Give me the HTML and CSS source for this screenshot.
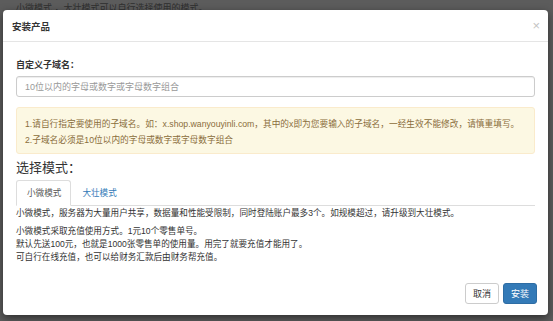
FILE: index.html
```html
<!DOCTYPE html>
<html lang="zh-CN">
<head>
  <meta charset="UTF-8" />
  <meta name="viewport" content="width=device-width, initial-scale=1.0"/>
  <title>安装产品</title>
  <link rel="stylesheet" href="styles.css">
</head>
<body>
  <div class="page">
    <p class="page-text">小微模式 ，大壮模式可以自行选择使用的模式。</p>
  </div>

  <div class="backdrop"></div>

  <div class="modal">
    <div class="modal-header">
      <h4 class="modal-title">安装产品</h4>
      <span class="close">&times;</span>
    </div>

    <div class="modal-body">
      <label class="field-label">自定义子域名：</label>
      <input class="field-input" type="text" placeholder="10位以内的字母或数字或字母数字组合" />

      <div class="alert">
        <p>1.请自行指定要使用的子域名。如：x.shop.wanyouyinli.com，其中的x即为您要输入的子域名，一经生效不能修改，请慎重填写。</p>
        <p>2.子域名必须是10位以内的字母或数字或字母数字组合</p>
      </div>

      <h3 class="mode-title">选择模式：</h3>
      <ul class="tabs">
        <li class="tab active">小微模式</li>
        <li class="tab">大壮模式</li>
      </ul>
      <div class="tab-content">
        <p>小微模式，服务器为大量用户共享，数据量和性能受限制，同时登陆账户最多3个。如规模超过，请升级到大壮模式。</p>
        <p>小微模式采取充值使用方式。1元10个零售单号。<br>默认先送100元，也就是1000张零售单的使用量。用完了就要充值才能用了。<br>可自行在线充值，也可以给财务汇款后由财务帮充值。</p>
      </div>
    </div>

    <div class="modal-footer">
      <button class="btn btn-default">取消</button>
      <button class="btn btn-primary">安装</button>
    </div>
  </div>
</body>
</html>
```

FILE: styles.css
```css
* {
  box-sizing: border-box;
  font-family: "Liberation Sans", "Noto Sans CJK SC", sans-serif;
}

body {
  margin: 0;
  background: #fff;
  width: 553px;
  height: 321px;
  overflow: hidden;
}

.page {
  padding: 1px 16px;
}

.page-text {
  margin: 0;
  font-size: 9px;
  color: #888;
}

.backdrop {
  position: absolute;
  left: 0;
  top: 0;
  width: 553px;
  height: 321px;
  background: rgba(0, 0, 0, 0.64);
}

.modal {
  position: absolute;
  left: 3px;
  top: 10px;
  width: 545px;
  height: 305px;
  background: #fff;
  border-radius: 4px;
  box-shadow: 0 3px 8px rgba(0, 0, 0, 0.5);
  display: flex;
  flex-direction: column;
  color: #333;
}

.modal-header {
  height: 32px;
  padding: 0 8px 0 9px;
  border-bottom: 1px solid #e5e5e5;
  display: flex;
  align-items: center;
  justify-content: space-between;
}

.modal-title {
  margin: 0;
  font-size: 9.5px;
  font-weight: bold;
  color: #333;
}

.close {
  font-size: 13px;
  color: #c4c4c4;
  line-height: 1;
}

.modal-body {
  flex: 1;
  padding: 17px 13px 0;
  display: flex;
  flex-direction: column;
}

.field-label {
  font-size: 9px;
  font-weight: bold;
  line-height: 12px;
}

.field-input {
  margin-top: 5px;
  height: 21px;
  width: 100%;
  border: 1px solid #ccc;
  border-radius: 3px;
  padding: 0 8px;
  font-size: 9px;
  color: #555;
  box-shadow: inset 0 1px 1px rgba(0, 0, 0, 0.075);
}

.field-input::placeholder {
  color: #999;
}

.alert {
  margin-top: 10px;
  padding: 8px 8px 6px;
  height: 47px;
  background: #fcf8e3;
  border: 1px solid #faebcc;
  border-radius: 3px;
  color: #8a6d3b;
  font-size: 8.7px;
  line-height: 16px;
  white-space: nowrap;
}

.alert p {
  margin: 0;
}

.mode-title {
  margin: 6px 0 0;
  font-size: 13px;
  font-weight: normal;
  line-height: 16px;
}

.tabs {
  list-style: none;
  margin: 4px 0 0;
  padding: 0;
  display: flex;
  border-bottom: 1px solid #ddd;
}

.tab {
  font-size: 8.6px;
  color: #337ab7;
  height: 26px;
  line-height: 25px;
  padding: 0 9px 0 10px;
  margin-bottom: -1px;
  border: 1px solid transparent;
  border-radius: 3px 3px 0 0;
}

.tab.active {
  color: #555;
  background: #fff;
  border-color: #ddd #ddd transparent;
}

.tab-content {
  font-size: 8.6px;
  line-height: 13px;
}

.tab-content p {
  margin: 1px 0 5px;
}

.modal-footer {
  padding: 0 11px 11px;
  display: flex;
  justify-content: flex-end;
  gap: 4px;
}

.btn {
  width: 34px;
  height: 21px;
  padding: 0;
  font-size: 9px;
  border-radius: 3px;
  border: 1px solid #ccc;
  cursor: pointer;
}

.btn-default {
  background: #fff;
  color: #333;
}

.btn-primary {
  background: #337ab7;
  border-color: #2e6da4;
  color: #fff;
}
```
